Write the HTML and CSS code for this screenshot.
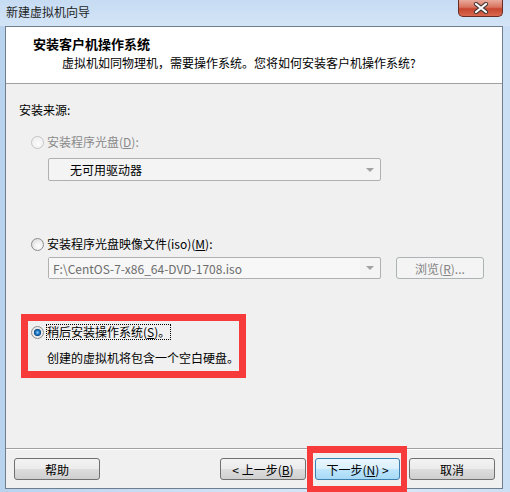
FILE: index.html
```html
<!DOCTYPE html>
<html lang="zh-CN">
<head>
    <meta charset="UTF-8">
    <meta name="viewport" content="width=device-width, initial-scale=1.0">
    <title>新建虚拟机向导</title>
    <link rel="stylesheet" href="styles.css">
</head>
<body>
    <div class="window">
        <div class="titlebar">
            <span class="title">新建虚拟机向导</span>
            <div class="close">
                <svg width="16" height="12" viewBox="0 0 16 12">
                    <path d="M3 2 L13 10 M13 2 L3 10" stroke="#4a3a3a" stroke-width="4.2" stroke-linecap="round"/>
                    <path d="M3 2 L13 10 M13 2 L3 10" stroke="#fff" stroke-width="2.2" stroke-linecap="round"/>
                </svg>
            </div>
        </div>

        <div class="client">
            <div class="header">
                <div class="header-title">安装客户机操作系统</div>
                <div class="header-sub">虚拟机如同物理机，需要操作系统。您将如何安装客户机操作系统?</div>
            </div>

            <div class="content">
                <div class="label">安装来源:</div>

                <div class="option disabled"><span class="radio off"></span>安装程序光盘(<u>D</u>):</div>
                <div class="combo drive"><span class="combo-text">无可用驱动器</span><span class="arrow"></span></div>

                <div class="option iso"><span class="radio"></span>安装程序光盘映像文件(iso)(<u>M</u>):</div>
                <div class="iso-row">
                    <div class="combo path"><span class="combo-text">F:\CentOS-7-x86_64-DVD-1708.iso</span><span class="arrow"></span></div>
                    <div class="btn disabled browse">浏览(<u>R</u>)...</div>
                </div>

                <div class="option later"><span class="radio checked"></span><span class="focus">稍后安装操作系统(<u>S</u>)。</span></div>
                <div class="note">创建的虚拟机将包含一个空白硬盘。</div>
            </div>

            <div class="footer">
                <div class="btn">帮助</div>
                <div class="nav">
                    <div class="btn">&lt; 上一步(<u>B</u>)</div>
                    <div class="btn default">下一步(<u>N</u>) &gt;</div>
                    <div class="btn">取消</div>
                </div>
            </div>
        </div>

        <!-- red annotation boxes drawn over the dialog -->
        <div class="mark mark-later"></div>
        <div class="mark mark-next"></div>
    </div>
</body>
</html>
```

FILE: styles.css
```css
body { margin: 0; font-family: "Noto Sans CJK SC", "Microsoft YaHei", sans-serif; font-size: 12px; color: #000; }
u { text-decoration: underline; text-underline-offset: 1px; }

.window { position: relative; width: 510px; height: 492px; overflow: hidden; display: flex; flex-direction: column;
    background: linear-gradient(90deg, #b9d3ef 0%, #cfe2f6 45%, #d9e8f8 75%, #cbdff4 100%); }

.titlebar { height: 26px; flex: none; display: flex; justify-content: space-between; align-items: flex-start;
    background: linear-gradient(180deg, #c6dcf3 0%, #d3e4f6 100%); }
.title { padding-left: 6px; line-height: 24px; color: #1e1e1e; }
.close { width: 45px; height: 17px; margin-right: 7px; box-sizing: border-box; display: flex; align-items: center; justify-content: center;
    border: 1px solid #6b2b25; border-top: none; border-radius: 0 0 5px 5px;
    background: linear-gradient(180deg, #e9a99c 0%, #d8735f 45%, #c7452f 55%, #d8694f 100%); }

.client { flex: 1; margin: 0 7px 3px 5px; display: flex; flex-direction: column; border: 1px solid #6f7e8f; background: #f0f0f0; }

.header { height: 57px; box-sizing: border-box; background: #fff; border-bottom: 1px solid #a0a0a0; padding: 8px 0 0 27px; }
.header-title { font-size: 13px; font-weight: bold; line-height: 17px; }
.header-sub { padding-left: 29px; margin-top: 3px; line-height: 16px; }

.content { flex: 1; padding-left: 13px; }
.label { margin-top: 18px; line-height: 16px; }

.option { display: flex; align-items: center; line-height: 16px; margin-left: 12px; }
.option.disabled { margin-top: 16px; color: #8a8a8a; }
.option.iso { margin-top: 55px; }
.option.later { margin-top: 46px; }

.radio { width: 13px; height: 13px; box-sizing: border-box; border-radius: 50%; margin-right: 3px; flex: none;
    border: 1px solid #8c8c8c; background: radial-gradient(circle at 60% 65%, #ffffff 0, #f0f0f0 40%, #d4d4d4 100%); }
.radio.off { border-color: #c4c4c4; background: radial-gradient(circle at 60% 65%, #fafafa 0, #ececec 100%); }
.radio.checked { background: radial-gradient(circle at 50% 50%, #8fd3fb 0, #2b84cf 1.6px, #0d4a86 3.4px, #e6e6e6 3.9px, #f7f7f7 100%); }

.focus { line-height: 14px; outline: 1px dotted #000; }

.combo { width: 333px; box-sizing: border-box; display: flex; align-items: center; justify-content: space-between;
    margin-left: 29px; border: 1px solid #b0b0b0; border-radius: 2px; background: #f4f4f4; }
.combo.drive { height: 23px; margin-top: 8px; }
.combo.drive .combo-text { padding-left: 21px; }
.combo.path { height: 22px; margin-left: 0; color: #6d6d6d; }
.combo.path .combo-text { align-self: stretch; display: flex; align-items: center; width: 307px; padding-left: 4px; background: #f7f7f7; }
.arrow { width: 0; height: 0; margin-right: 6px; border-left: 4px solid transparent; border-right: 4px solid transparent; border-top: 4px solid #a2a2a2; }

.iso-row { display: flex; margin: 5px 0 0 29px; gap: 15px; }

.btn { width: 86px; height: 22px; box-sizing: border-box; display: flex; align-items: center; justify-content: center;
    border: 1px solid #707070; border-radius: 3px;
    background: linear-gradient(180deg, #f3f3f3 0%, #ebebeb 50%, #dddddd 51%, #cfcfcf 100%); }
.btn.default { width: 85px; border-color: #3c7fb1; background: linear-gradient(180deg, #eaf6fd 0%, #d9f0fc 50%, #bee6fd 51%, #a7d9f5 100%); }
.btn.disabled { border-color: #adb2b5; background: #f4f4f4; color: #838383; }
.browse { width: 88px; }

.note { margin: 11px 0 0 28px; line-height: 16px; }

.footer { height: 40px; box-sizing: border-box; border-top: 1px solid #a0a0a0; box-shadow: inset 0 1px #fff;
    display: flex; justify-content: space-between; align-items: flex-start; padding: 9px 7px 0 8px; }
.nav { display: flex; gap: 9px; }

.mark { position: absolute; border: 7px solid #f73b3b; box-sizing: border-box; }
.mark-later { left: 21px; top: 314px; width: 225px; height: 64px; }
.mark-next { left: 307px; top: 446px; width: 100px; height: 46px; border-width: 7px 6px 6px 6px; }
```
